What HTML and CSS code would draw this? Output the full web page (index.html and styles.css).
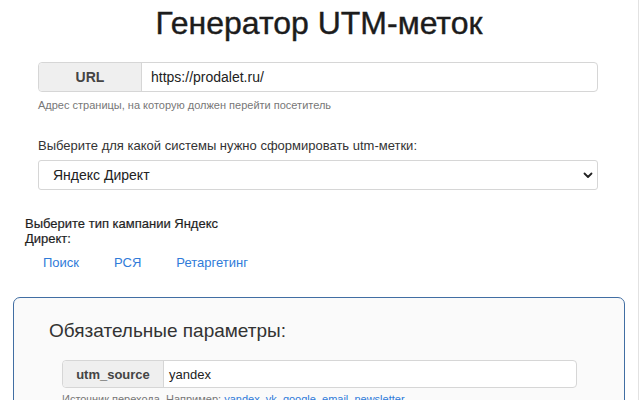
FILE: index.html
```html
<!DOCTYPE html>
<html lang="ru">
<head>
<meta charset="utf-8">
<link rel="stylesheet" href="styles.css">
</head>
<body>
<div class="page">
  <h1 class="title">Генератор UTM-меток</h1>

  <div class="form-area">
    <div class="input-group">
      <span class="addon">URL</span>
      <span class="field">https://prodalet.ru/</span>
    </div>
    <p class="help">Адрес страницы, на которую должен перейти посетитель</p>

    <p class="label">Выберите для какой системы нужно сформировать utm-метки:</p>
    <div class="select">
      <span>Яндекс Директ</span>
      <svg class="chev" width="10" height="7" viewBox="0 0 10 7"><path d="M1.5 1.5 L5 5 L8.5 1.5" fill="none" stroke="#222" stroke-width="1.8" stroke-linecap="round" stroke-linejoin="round"/></svg>
    </div>
  </div>

  <p class="campaign-label">Выберите тип кампании Яндекс Директ:</p>
  <nav class="tabs">
    <a class="tab">Поиск</a>
    <a class="tab">РСЯ</a>
    <a class="tab">Ретаргетинг</a>
  </nav>

  <section class="card">
    <h2 class="card-title">Обязательные параметры:</h2>
    <div class="input-group small">
      <span class="addon">utm_source</span>
      <span class="field">yandex</span>
    </div>
    <p class="help inner">Источник перехода. Например: <a class="link">yandex, vk, google, email, newsletter</a></p>
  </section>
</div>
</body>
</html>
```

FILE: styles.css
```css
* { box-sizing: border-box; }
html, body { margin: 0; padding: 0; background: #fff; }
body {
  font-family: "Liberation Sans", Arial, sans-serif;
  color: #222;
  border-right: 1px solid #e2e2e2;
  width: 639px;
  height: 400px;
  overflow: hidden;
}
.page { padding: 0 13px; }
.title {
  margin: 4px 0 0;
  font-size: 32px;
  line-height: 38px;
  font-weight: normal;
  text-align: center;
  color: #1c1c1c;
  -webkit-text-stroke: 0.4px #1c1c1c;
}
.form-area { padding: 0 27px 0 25px; margin-top: 20px; }
.input-group {
  display: flex;
  height: 30px;
  border: 1px solid #d6d6d6;
  border-radius: 4px;
  background: #fff;
}
.addon {
  width: 103px;
  flex: none;
  display: flex;
  align-items: center;
  justify-content: center;
  background: #efefef;
  border-right: 1px solid #d6d6d6;
  border-radius: 4px 0 0 4px;
  font-size: 14px;
  font-weight: bold;
  color: #444;
}
.field {
  display: flex;
  align-items: center;
  padding-left: 9px;
  font-size: 14px;
  color: #222;
}
.help {
  margin: 6px 0 0;
  font-size: 11px;
  line-height: 14px;
  color: #777;
}
.label {
  margin: 26px 0 0;
  font-size: 13px;
  line-height: 16px;
  color: #333;
}
.select {
  margin-top: 6px;
  height: 30px;
  border: 1px solid #d6d6d6;
  border-radius: 3px;
  display: flex;
  align-items: center;
  justify-content: space-between;
  padding: 0 4px 0 14px;
  font-size: 14px;
  color: #222;
}
.campaign-label {
  margin: 26px 0 0 12px;
  width: 200px;
  font-size: 13px;
  line-height: 15px;
  color: #1f1f1f;
  -webkit-text-stroke: 0.2px #1f1f1f;
}
.tabs {
  display: flex;
  margin: 5px 0 0 12px;
}
.tab {
  padding: 4px 17px 4px 18px;
  font-size: 13px;
  line-height: 16px;
  color: #2f7bd9;
}
.card {
  margin-top: 22px;
  height: 140px;
  border: 1.5px solid #416ea3;
  border-radius: 7px;
  background: #fafafa;
  padding: 21px 47px 0 35px;
}
.card-title {
  margin: 0;
  font-size: 19px;
  line-height: 24px;
  font-weight: normal;
  color: #333;
}
.input-group.small {
  margin: 17px 0 0 13px;
  height: 28px;
}
.input-group.small .addon {
  width: 101px;
  font-size: 13px;
}
.input-group.small .field { font-size: 13px; padding-left: 5px; }
.help.inner { margin: 4px 0 0 13px; }
.link { color: #2f7bd9; }
```
